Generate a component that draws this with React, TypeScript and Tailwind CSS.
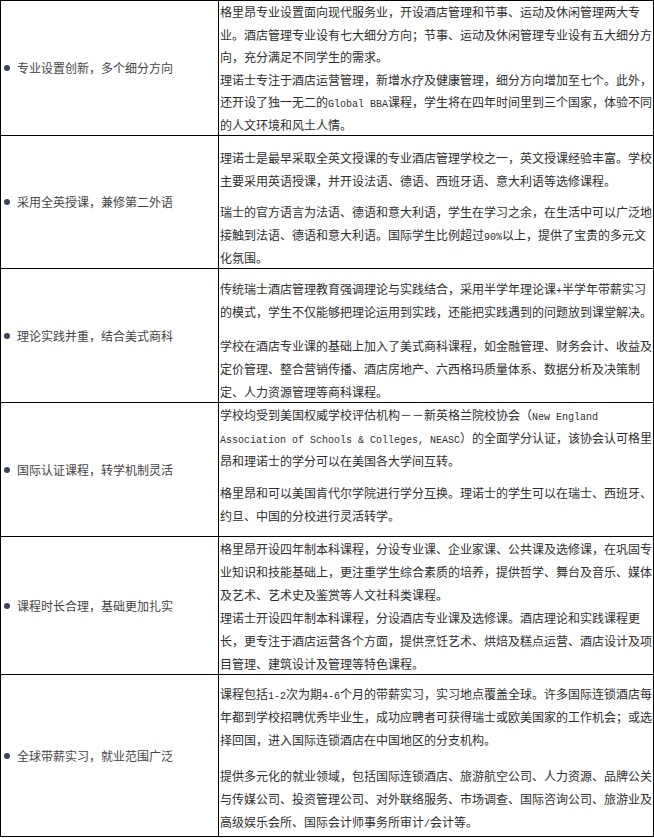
import React from 'react';

// latin runs in the reference are a narrow monospace (6px per char)
function L({ children }: { children: React.ReactNode }) {
  return <span className="font-['Liberation_Mono',monospace] text-[10px] leading-none">{children}</span>;
}

type Row = {
  label: string;
  rowClass: string;
  cellClass: string;
  gapClass: string;
  paras: React.ReactNode[];
};

const rows: Row[] = [
  {
    label: '专业设置创新，多个细分方向',
    rowClass: 'h-[135px]',
    cellClass: 'pt-0 leading-[22.5px]',
    gapClass: 'mt-0',
    paras: [
      '格里昂专业设置面向现代服务业，开设酒店管理和节事、运动及休闲管理两大专业。酒店管理专业设有七大细分方向；节事、运动及休闲管理专业设有五大细分方向，充分满足不同学生的需求。',
      <>
        理诺士专注于酒店运营管理，新增水疗及健康管理，细分方向增加至七个。此外，还开设了独一无二的<L>Global BBA</L>
        课程，学生将在四年时间里到三个国家，体验不同的人文环境和风土人情。
      </>,
    ],
  },
  {
    label: '采用全英授课，兼修第二外语',
    rowClass: 'h-[133px]',
    cellClass: 'pt-[10px] leading-[23px]',
    gapClass: 'mt-[8px]',
    paras: [
      '理诺士是最早采取全英文授课的专业酒店管理学校之一，英文授课经验丰富。学校主要采用英语授课，并开设法语、德语、西班牙语、意大利语等选修课程。',
      <>
        瑞士的官方语言为法语、德语和意大利语，学生在学习之余，在生活中可以广泛地接触到法语、德语和意大利语。国际学生比例超过<L>90%</L>以上，提供了宝贵的多元文化氛围。
      </>,
    ],
  },
  {
    label: '理论实践并重，结合美式商科',
    rowClass: 'h-[134px]',
    cellClass: 'pt-[8px] leading-[23px]',
    gapClass: 'mt-[11px]',
    paras: [
      <>
        传统瑞士酒店管理教育强调理论与实践结合，采用半学年理论课<L>+</L>半学年带薪实习的模式，学生不仅能够把理论运用到实践，还能把实践遇到的问题放到课堂解决。
      </>,
      '学校在酒店专业课的基础上加入了美式商科课程，如金融管理、财务会计、收益及定价管理、整合营销传播、酒店房地产、六西格玛质量体系、数据分析及决策制定、人力资源管理等商科课程。',
    ],
  },
  {
    label: '国际认证课程，转学机制灵活',
    rowClass: 'h-[134px]',
    cellClass: 'pt-0 leading-[23px]',
    gapClass: 'mt-[9px]',
    paras: [
      <>
        学校均受到美国权威学校评估机构－－新英格兰院校协会（<L>New England Association of Schools &amp; Colleges, NEASC</L>）的全面学分认证，该协会认可格里昂和理诺士的学分可以在美国各大学间互转。
      </>,
      '格里昂和可以美国肯代尔学院进行学分互换。理诺士的学生可以在瑞士、西班牙、约旦、中国的分校进行灵活转学。',
    ],
  },
  {
    label: '课程时长合理，基础更加扎实',
    rowClass: 'h-[138px]',
    cellClass: 'pt-0 leading-[23px]',
    gapClass: 'mt-0',
    paras: [
      '格里昂开设四年制本科课程，分设专业课、企业家课、公共课及选修课，在巩固专业知识和技能基础上，更注重学生综合素质的培养，提供哲学、舞台及音乐、媒体及艺术、艺术史及鉴赏等人文社科类课程。',
      '理诺士开设四年制本科课程，分设酒店专业课及选修课。酒店理论和实践课程更长，更专注于酒店运营各个方面，提供烹饪艺术、烘焙及糕点运营、酒店设计及项目管理、建筑设计及管理等特色课程。',
    ],
  },
  {
    label: '全球带薪实习，就业范围广泛',
    rowClass: 'h-[162px]',
    cellClass: 'pt-[7px] leading-[23px]',
    gapClass: 'mt-[13px]',
    paras: [
      <>
        课程包括<L>1-2</L>次为期<L>4-6</L>个月的带薪实习，实习地点覆盖全球。许多国际连锁酒店每年都到学校招聘优秀毕业生，成功应聘者可获得瑞士或欧美国家的工作机会；或选择回国，进入国际连锁酒店在中国地区的分支机构。
      </>,
      <>
        提供多元化的就业领域，包括国际连锁酒店、旅游航空公司、人力资源、品牌公关与传媒公司、投资管理公司、对外联络服务、市场调查、国际咨询公司、旅游业及高级娱乐会所、国际会计师事务所审计<L>/</L>会计等。
      </>,
    ],
  },
];

export default function App() {
  return (
    <div className="w-[654px] bg-white font-['Noto_Sans_CJK_SC',sans-serif] text-[12px]">
      <div className="border-t border-l border-black">
        {rows.map((row, i) => (
          <div key={i} className={`flex border-b border-black ${row.rowClass}`}>
            <div className="w-[218px] shrink-0 border-r border-black flex items-center pl-[3px] text-[#454545]">
              <span className="w-[6px] h-[6px] rounded-full bg-[#3a4656] shrink-0" />
              <span className="ml-[7px]">{row.label}</span>
            </div>
            <div className={`flex-1 border-r border-black pl-[1px] text-[#2e2e2e] ${row.cellClass}`}>
              {row.paras.map((p, j) => (
                <p key={j} className={j > 0 ? row.gapClass : ''}>
                  {p}
                </p>
              ))}
            </div>
          </div>
        ))}
      </div>
    </div>
  );
}
